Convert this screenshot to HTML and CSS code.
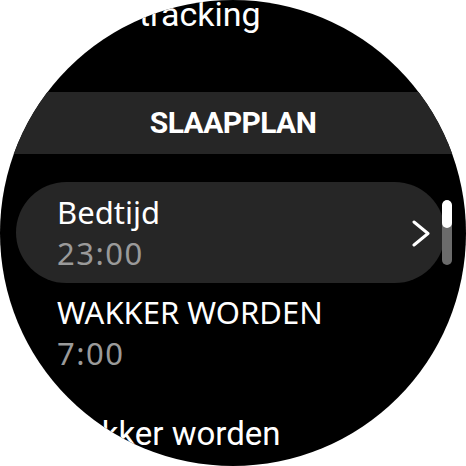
FILE: index.html
```html
<!DOCTYPE html>
<html lang="nl">
<head>
<meta charset="utf-8">
<title>Slaapplan</title>
<link rel="stylesheet" href="styles.css">
</head>
<body>
<div class="screen">
  <div class="row-text top">tracking</div>
  <div class="header">SLAAPPLAN</div>
  <div class="card">
    <div class="lines">
      <div class="primary">Bedtijd</div>
      <div class="secondary">23:00</div>
    </div>
    <svg class="chev" width="20" height="28" viewBox="0 0 20 28"><polyline points="3,3 17,14.5 3,26" fill="none" stroke="#fff" stroke-width="3" stroke-linecap="round" stroke-linejoin="round"/></svg>
  </div>
  <div class="item">
    <div class="primary">WAKKER WORDEN</div>
    <div class="secondary">7:00</div>
  </div>
  <div class="row-text bottom">Wakker worden</div>
  <div class="scrollbar"><div class="thumb"></div></div>
</div>
</body>
</html>
```
FILE: styles.css
```css
html, body {
  margin: 0;
  padding: 0;
  background: #fff;
}
.screen {
  position: relative;
  width: 466px;
  height: 466px;
  border-radius: 50%;
  overflow: hidden;
  background: #000;
  color: #fff;
  display: flex;
  flex-direction: column;
}
.row-text {
  flex: none;
  font-family: Roboto, "Noto Sans", sans-serif;
  white-space: nowrap;
}
.top {
  margin-top: -4px;
  font-size: 34px;
  line-height: 36px;
  padding-left: 139px;
}
.header {
  margin-top: 60px;
  height: 62px;
  flex: none;
  background: #262626;
  display: flex;
  align-items: center;
  justify-content: center;
  font-family: Roboto, sans-serif;
  font-weight: 700;
  font-size: 30px;
  line-height: 30px;
  letter-spacing: -0.6px;
}
.card {
  margin: 28px 21px 0 16px;
  height: 101px;
  flex: none;
  box-sizing: border-box;
  border-radius: 51px;
  background: #262626;
  padding: 0 14px 0 41px;
  display: flex;
  align-items: center;
}
.lines {
  flex: 1;
}
.primary, .secondary {
  font-family: "Noto Sans", sans-serif;
  font-size: 31px;
  line-height: 41px;
  white-space: nowrap;
}
.secondary {
  color: #9a9a9a;
  letter-spacing: 1.5px;
}
.chev {
  flex: none;
  display: block;
}
.item {
  flex: none;
  margin-top: 9px;
  padding-left: 57px;
}
.bottom {
  margin-top: 40px;
  font-size: 33px;
  line-height: 40px;
  padding-left: 55px;
}
.scrollbar {
  position: absolute;
  left: 442px;
  top: 200px;
  width: 10px;
  height: 65px;
  border-radius: 5px;
  background: #6b6b6b;
  overflow: hidden;
}
.thumb {
  height: 28px;
  border-radius: 5px;
  background: #fff;
}
```
